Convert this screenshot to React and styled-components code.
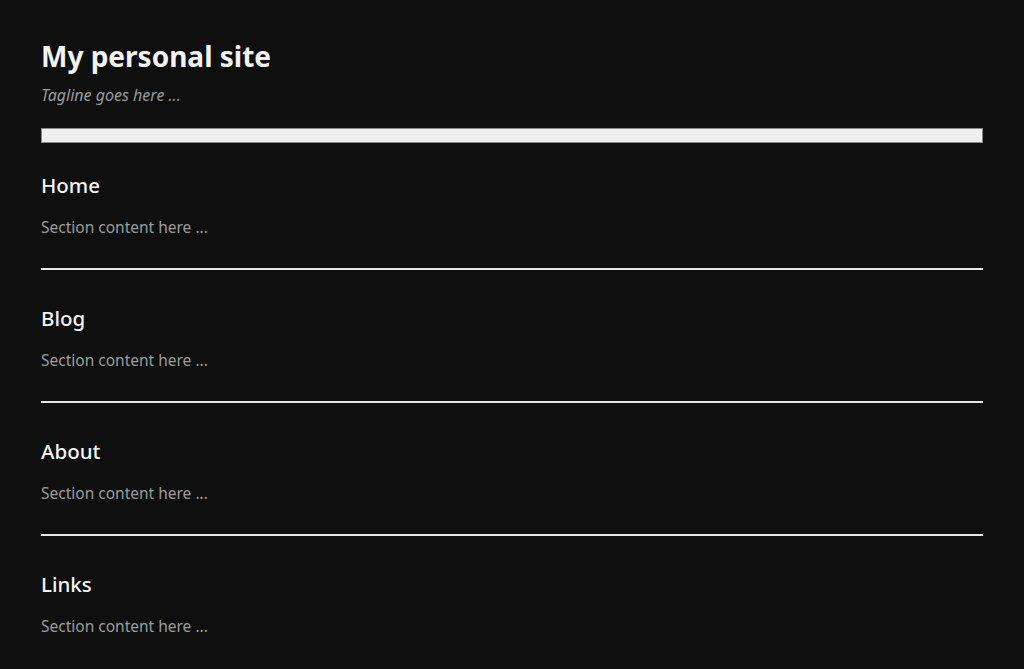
import React from 'react'
import styled, { createGlobalStyle } from 'styled-components'

const GlobalStyle = createGlobalStyle`
  html, body {
    margin: 0;
    padding: 0;
    background: #0f0f0f;
  }
  body {
    font-family: "Noto Sans", "Open Sans", sans-serif;
    color: #f0f0f0;
  }
`

const Page = styled.div`
  min-height: 669px;
  padding: 39px 41px 0 41px;
  box-sizing: border-box;
`

const Title = styled.h1`
  margin: 0;
  font-size: 28px;
  line-height: 34px;
  font-weight: 700;
  color: #f2f2f2;
`

const Tagline = styled.p`
  margin: 11px 0 0 0;
  font-size: 16px;
  line-height: 23px;
  font-style: italic;
  color: #9a9a9a;
`

const NavBar = styled.nav`
  margin-top: 21px;
  height: 13px;
  background: #efefef;
  border: 1px solid #8a8a8a;
`

const Section = styled.section`
  padding: ${props => props.first ? "30px" : "36px"} 0 29px 0;
  border-bottom: ${props => props.last ? "none" : "2px solid #e8e8e8"};
`

const Heading = styled.h2`
  margin: 0;
  font-size: 20.5px;
  line-height: 24px;
  font-weight: 500;
  color: #f4f4f4;
`

const Content = styled.p`
  margin: 18px 0 0 0;
  font-size: 15.5px;
  line-height: 24px;
  color: #9c9c9c;
`

const sections = ["Home", "Blog", "About", "Links"]

export default function App() {
  return (
    <>
      <GlobalStyle />
      <Page>
        <Title>My personal site</Title>
        <Tagline>Tagline goes here ...</Tagline>
        <NavBar />
        {sections.map((name, i) => (
          <Section key={name} first={i === 0} last={i === sections.length - 1}>
            <Heading>{name}</Heading>
            <Content>Section content here ...</Content>
          </Section>
        ))}
      </Page>
    </>
  )
}
